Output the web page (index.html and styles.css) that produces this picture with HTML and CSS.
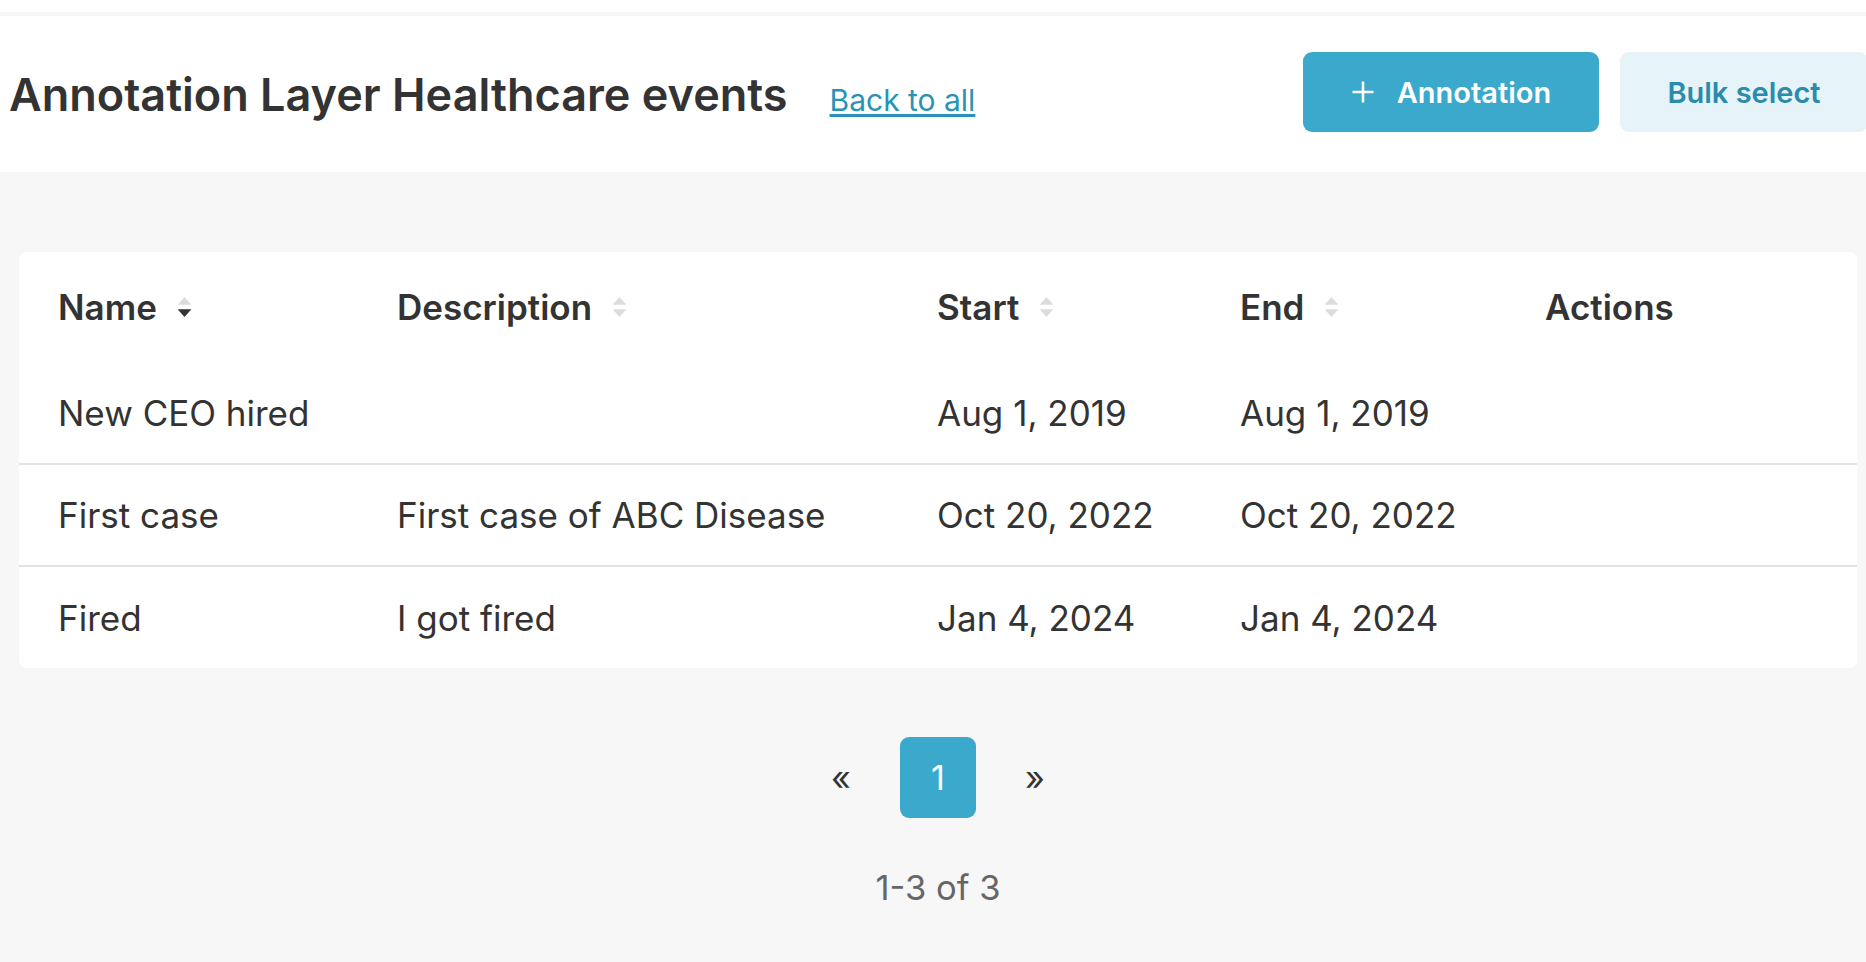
FILE: index.html
```html
<!DOCTYPE html>
<html lang="en">
<head>
<meta charset="utf-8">
<title>Annotation Layer Healthcare events</title>
<link rel="stylesheet" href="styles.css">
</head>
<body>
<div class="topbar"></div>
<header class="submenu">
  <div class="submenu-left">
    <h1 class="submenu-title">Annotation Layer Healthcare events</h1>
    <a href="#" class="back-link">Back to all</a>
  </div>
  <div class="submenu-actions">
    <button class="btn btn-primary">
      <svg class="btn-icon" viewBox="0 0 24 24" aria-hidden="true"><path d="M12 1.5v21M1.5 12h21" stroke="#fff" stroke-width="2.6" fill="none"/></svg>
      <span>Annotation</span>
    </button>
    <button class="btn btn-secondary">Bulk select</button>
  </div>
</header>

<main class="content">
  <section class="card">
    <table class="table">
      <colgroup>
        <col class="col-name"><col class="col-desc"><col class="col-start"><col class="col-end"><col>
      </colgroup>
      <thead>
        <tr>
          <th><span class="th-inner">Name <svg class="sort" viewBox="0 0 10 15" aria-hidden="true"><path class="up" d="M5 0.6 L9.4 5.6 Q9.6 6 9.2 6 H0.8 Q0.4 6 0.6 5.6 Z"/><path class="down active" d="M5 14.4 L9.4 9.4 Q9.6 9 9.2 9 H0.8 Q0.4 9 0.6 9.4 Z"/></svg></span></th>
          <th><span class="th-inner">Description <svg class="sort" viewBox="0 0 10 15" aria-hidden="true"><path class="up" d="M5 0.6 L9.4 5.6 Q9.6 6 9.2 6 H0.8 Q0.4 6 0.6 5.6 Z"/><path class="down" d="M5 14.4 L9.4 9.4 Q9.6 9 9.2 9 H0.8 Q0.4 9 0.6 9.4 Z"/></svg></span></th>
          <th><span class="th-inner">Start <svg class="sort" viewBox="0 0 10 15" aria-hidden="true"><path class="up" d="M5 0.6 L9.4 5.6 Q9.6 6 9.2 6 H0.8 Q0.4 6 0.6 5.6 Z"/><path class="down" d="M5 14.4 L9.4 9.4 Q9.6 9 9.2 9 H0.8 Q0.4 9 0.6 9.4 Z"/></svg></span></th>
          <th><span class="th-inner">End <svg class="sort" viewBox="0 0 10 15" aria-hidden="true"><path class="up" d="M5 0.6 L9.4 5.6 Q9.6 6 9.2 6 H0.8 Q0.4 6 0.6 5.6 Z"/><path class="down" d="M5 14.4 L9.4 9.4 Q9.6 9 9.2 9 H0.8 Q0.4 9 0.6 9.4 Z"/></svg></span></th>
          <th><span class="th-inner">Actions</span></th>
        </tr>
      </thead>
      <tbody>
        <tr>
          <td>New CEO hired</td><td></td><td>Aug 1, 2019</td><td>Aug 1, 2019</td><td></td>
        </tr>
        <tr>
          <td>First case</td><td>First case of ABC Disease</td><td>Oct 20, 2022</td><td>Oct 20, 2022</td><td></td>
        </tr>
        <tr>
          <td>Fired</td><td>I got fired</td><td>Jan 4, 2024</td><td>Jan 4, 2024</td><td></td>
        </tr>
      </tbody>
    </table>
  </section>

  <nav class="pagination">
    <span class="page-item page-arrow">«</span>
    <span class="page-item page-active">1</span>
    <span class="page-item page-arrow">»</span>
  </nav>
  <div class="page-count">1-3 of 3</div>
</main>
</body>
</html>
```

FILE: styles.css
```css
* { box-sizing: border-box; }

html, body {
  margin: 0;
  padding: 0;
}

body {
  width: 1866px;
  height: 962px;
  overflow: hidden;
  background: #f7f7f7;
  font-family: Inter, "Noto Sans", "Liberation Sans", sans-serif;
  color: #333333;
}

.topbar {
  height: 12px;
  background: #ffffff;
  margin-bottom: 4px;
}

.submenu {
  height: 156px;
  background: #ffffff;
  display: flex;
  align-items: center;
  justify-content: space-between;
  padding-left: 9px;
}

.submenu-left {
  display: flex;
  align-items: baseline;
  gap: 42px;
}

.submenu-title {
  margin: 0;
  font-size: 45px;
  font-weight: 600;
  color: #333333;
  letter-spacing: 0;
}

.back-link {
  font-size: 30px;
  color: #2a93b5;
  text-decoration: underline;
  text-underline-offset: 3px;
}

.submenu-actions {
  display: flex;
  gap: 21px;
  flex-shrink: 0;
  margin-right: -2px;
  align-self: center;
  margin-top: -4px;
}

.btn {
  height: 80px;
  border: none;
  border-radius: 9px;
  font-family: Inter, "Noto Sans", "Liberation Sans", sans-serif;
  font-size: 29px;
  font-weight: 600;
  display: inline-flex;
  align-items: center;
  justify-content: center;
  padding: 0 45px;
  cursor: pointer;
}

.btn-primary {
  width: 296px;
  background: #3ba9cc;
  color: #ffffff;
  gap: 22px;
}

.btn-icon {
  width: 24px;
  height: 24px;
}

.btn-secondary {
  width: 248px;
  background: #e6f4f9;
  color: #2a8bab;
}

.content {
  padding: 80px 9px 0 19px;
}

.card {
  background: #ffffff;
  border-radius: 8px;
  overflow: hidden;
}

.table {
  width: 100%;
  border-collapse: collapse;
  table-layout: fixed;
}

.col-name { width: 378px; }
.col-desc { width: 540px; }
.col-start { width: 303px; }
.col-end { width: 305px; }

.table th,
.table td {
  padding: 0;
  text-align: left;
  font-size: 35px;
  white-space: nowrap;
  color: #333333;
}

.table th:first-child,
.table td:first-child {
  padding-left: 39px;
}

.table th {
  height: 110px;
  font-weight: 600;
  vertical-align: middle;
}

.table td {
  height: 102px;
  font-weight: 400;
  vertical-align: middle;
}

.table tbody tr + tr td {
  border-top: 2px solid #e3e3e3;
}

.th-inner {
  display: inline-flex;
  align-items: center;
  gap: 20px;
}

.sort {
  width: 15px;
  height: 22px;
}

.sort path {
  fill: #dcdcdc;
}

.sort path.active {
  fill: #333333;
}

.pagination {
  display: flex;
  justify-content: center;
  gap: 21px;
  margin-top: 69px;
}

.page-item {
  width: 76px;
  height: 81px;
  display: flex;
  align-items: center;
  justify-content: center;
  font-size: 34px;
  color: #333333;
}

.page-arrow {
  font-size: 34px;
}

.page-active {
  background: #3ba9cc;
  color: #ffffff;
  border-radius: 9px;
}

.page-count {
  text-align: center;
  margin-top: 49px;
  font-size: 34.5px;
  color: #666666;
}
```
